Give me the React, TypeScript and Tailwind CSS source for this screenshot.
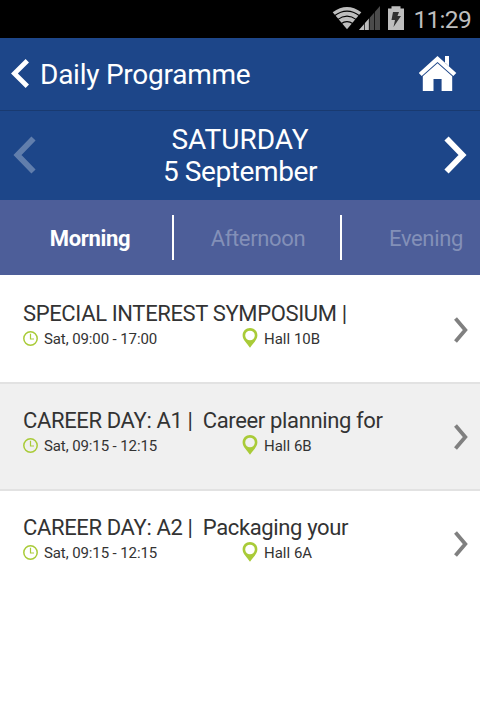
import { useState } from 'react'

const tabs = ['Morning', 'Afternoon', 'Evening']

const sessions = [
  { title: 'SPECIAL INTEREST SYMPOSIUM |', time: 'Sat, 09:00 - 17:00', hall: 'Hall 10B' },
  { title: 'CAREER DAY: A1 |\u00a0 Career planning for', time: 'Sat, 09:15 - 12:15', hall: 'Hall 6B' },
  { title: 'CAREER DAY: A2 |\u00a0 Packaging your', time: 'Sat, 09:15 - 12:15', hall: 'Hall 6A' },
]

function StatusBar() {
  return (
    <div className="flex h-[38px] items-start justify-end bg-black pr-[9px] text-[#bebebe]">
      <svg width="73" height="38" viewBox="332 0 73 38" className="mr-2">
        {/* wifi */}
        <path d="M332.7 12.2Q347 1.8 361.3 12.2L347 29.2Z" fill="currentColor" />
        <g fill="none" stroke="#000" strokeWidth="1.1">
          <path d="M334.5 15.7Q347 6.5 359.5 15.7" />
          <path d="M337.5 19.6Q347 12.6 356.5 19.6" />
          <path d="M341 23.8Q347 19.4 353 23.8" />
        </g>
        {/* signal */}
        <path d="M359 30L380 6V30Z" fill="#4b4b4b" />
        <path d="M359 30L369 18.6V30Z" fill="currentColor" />
        <path d="M364.5 20V30M369.3 15V30M374.5 9V30" stroke="#000" strokeWidth="0.7" />
        {/* battery */}
        <path d="M388 8.5H391.5V6.3H400.5V8.5H404V30H388Z" fill="currentColor" />
        <path d="M393 12H399L397.5 16H401L393.5 27L395 20H391.5Z" fill="#303030" />
      </svg>
      <span className="text-[24.5px] leading-[39px] tracking-[-0.7px]">11:29</span>
    </div>
  )
}

function Chevron({ className }: { className: string }) {
  return (
    <svg viewBox="0 0 24 38" fill="none" stroke="currentColor" strokeWidth="5.8" className={className}>
      <path d="M2.5 2.5L18.5 19L2.5 35.5" />
    </svg>
  )
}

function ClockIcon() {
  return (
    <svg width="16" height="16" viewBox="0 0 16 16" fill="none" stroke="#a9cb38">
      <circle cx="7.5" cy="7.5" r="6.7" strokeWidth="1.5" />
      <path d="M7.5 2.8V8H11" strokeWidth="1.2" />
    </svg>
  )
}

function PinIcon() {
  return (
    <svg width="16" height="20" viewBox="0 0 16 20" className="-mt-0.5">
      <path
        d="M8 0C3.8 0 .6 3.2.6 7.3C.6 12 4.5 14.5 8 19.8C11.5 14.5 15.4 12 15.4 7.3C15.4 3.2 12.2 0 8 0ZM8 2.7A4.8 4.8 0 1 1 8 12.3A4.8 4.8 0 1 1 8 2.7Z"
        fill="#a9cb38"
        fillRule="evenodd"
      />
    </svg>
  )
}

export default function App() {
  const [active, setActive] = useState('Morning')

  return (
    <div className="h-[728px] w-[480px] overflow-hidden bg-white font-['Roboto',sans-serif] text-[#333]">
      <StatusBar />

      <header className="flex h-[73px] items-center border-b border-[#193a70] bg-[#1d4689] pr-[23px] pl-[11px] text-white">
        <svg width="18" height="32" viewBox="0 0 18 32" fill="none" stroke="currentColor" strokeWidth="4.8">
          <path d="M16.3 2.7L3.4 15.5L16.3 28.3" />
        </svg>
        <h1 className="mt-px ml-[11px] text-[28px] leading-8 tracking-[-0.25px] whitespace-nowrap">Daily Programme</h1>
        <svg width="38" height="37" viewBox="0 0 38 37" fill="currentColor" className="-mt-0.5 ml-auto">
          <path d="M18.5 1L37.3 18L34.3 21L18.5 7L2.7 21L-.3 18Z" />
          <path d="M26 1H30V11.5L26 7.5Z" />
          <path d="M18.5 8.2L33.2 21.3V36H22.6V24H14.5V36H3.8V21.3Z" />
        </svg>
      </header>

      <div className="flex h-[89px] items-center justify-between bg-[#1d4689] pr-3 pl-3 text-white">
        <Chevron className="-mt-0.5 h-[38px] w-6 rotate-180 opacity-30" />
        <p className="mt-px text-center text-[28px] leading-8">
          SATURDAY
          <br />
          <span className="tracking-[-0.4px]">5 September</span>
        </p>
        <Chevron className="-mt-0.5 h-[38px] w-6" />
      </div>

      <nav className="flex h-[75px] items-center overflow-hidden bg-[#4d5e99] pl-1.5 text-[22px] tracking-[-0.35px]">
        {tabs.map((tab) => (
          <button
            key={tab}
            onClick={() => setActive(tab)}
            className={`h-[45px] w-[168px] shrink-0 border-r-2 border-white pt-0.5 pl-0.5 ${
              tab === active ? 'font-bold text-white' : 'text-[#8390b8]'
            }`}
          >
            {tab}
          </button>
        ))}
      </nav>

      <ul className="pt-0.5">
        {sessions.map((session) => (
          <li
            key={session.title}
            className="flex h-[107px] items-center justify-between border-b-2 border-[#e2e2e2] pr-3 pl-[23px] last:border-white even:bg-[#f0f0f0]"
          >
            <div className="-mt-2">
              <h2 className="h-[27px] text-[22px] leading-6 tracking-[-0.36px] whitespace-nowrap">
                {session.title}
              </h2>
              <div className="flex h-5 items-center text-[15px]">
                <span className="flex w-[219px] items-center gap-[5px] tracking-[-0.1px]">
                  <ClockIcon />
                  {session.time}
                </span>
                <span className="flex items-center gap-1.5">
                  <PinIcon />
                  {session.hall}
                </span>
              </div>
            </div>
            <svg width="14" height="28" viewBox="0 0 14 28" fill="none" stroke="#808080" strokeWidth="3.8">
              <path d="M1.5 2.5L11.3 14L1.5 25.5" />
            </svg>
          </li>
        ))}
      </ul>
    </div>
  )
}
